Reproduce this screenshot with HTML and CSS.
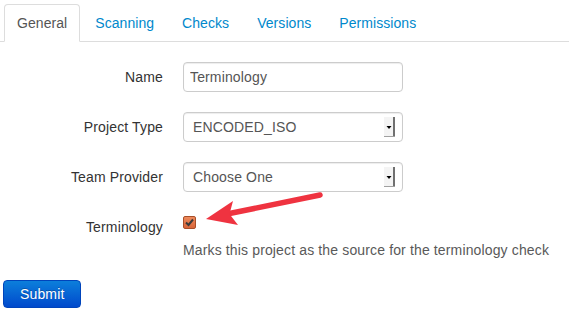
FILE: index.html
```html
<!DOCTYPE html>
<html>
<head>
<meta charset="utf-8">
<link rel="stylesheet" href="styles.css">
</head>
<body>
<div class="page">
  <ul class="tabs">
    <li class="tab active"><a>General</a></li>
    <li class="tab"><a>Scanning</a></li>
    <li class="tab"><a>Checks</a></li>
    <li class="tab"><a>Versions</a></li>
    <li class="tab"><a>Permissions</a></li>
  </ul>
  <form class="form">
    <div class="group">
      <label class="label">Name</label>
      <div class="controls"><input class="input" type="text" value="Terminology"></div>
    </div>
    <div class="group">
      <label class="label">Project Type</label>
      <div class="controls"><select class="select"><option>ENCODED_ISO</option></select></div>
    </div>
    <div class="group">
      <label class="label">Team Provider</label>
      <div class="controls"><select class="select"><option>Choose One</option></select></div>
    </div>
    <div class="group">
      <label class="label">Terminology</label>
      <div class="controls">
        <div class="check-row">
          <span class="checkbox"><svg width="13" height="13" viewBox="0 0 13 13"><path d="M3 6.5 L5.5 9 L10 3.5" fill="none" stroke="#3a3a3a" stroke-width="2"/></svg></span>
        </div>
        <p class="help">Marks this project as the source for the terminology check</p>
      </div>
    </div>
    <div class="actions">
      <button type="button" class="btn">Submit</button>
    </div>
  </form>
  <svg class="annot" width="569" height="333" viewBox="0 0 569 333">
    <line x1="227" y1="214" x2="320" y2="195" stroke="#ef3340" stroke-width="5.5" stroke-linecap="round"/>
    <polygon points="206,219 233,201 229.5,214 238,225" fill="#ef3340"/>
  </svg>
</div>
</body>
</html>
```
FILE: styles.css
```css
* { box-sizing: border-box; }
html, body { margin: 0; padding: 0; background: #fff; }
body {
  font-family: "Liberation Sans", Arial, sans-serif;
  font-size: 14px;
  line-height: 20px;
  letter-spacing: 0.14px;
  color: #333;
}
.page {
  position: relative;
  width: 569px;
  height: 333px;
  padding-top: 4px;
}
.tabs {
  list-style: none;
  margin: 0 0 20px 0;
  padding: 0 0 0 4px;
  display: flex;
  border-bottom: 1px solid #ddd;
  letter-spacing: 0.06px;
}
.tab {
  margin-right: 2px;
  margin-bottom: -1px;
}
.tab a {
  display: block;
  padding: 8px 12px;
  line-height: 20px;
  border: 1px solid transparent;
  border-radius: 4px 4px 0 0;
  color: #0088cc;
}
.tab.active a {
  color: #555;
  background: #fff;
  border-color: #ddd #ddd transparent #ddd;
}
.form {
  padding-left: 3px;
}
.group {
  display: flex;
  margin-bottom: 20px;
}
.label {
  width: 160px;
  flex: none;
  text-align: right;
  padding-top: 5px;
  color: #333;
}
.controls {
  margin-left: 20px;
}
.input, .select {
  display: block;
  width: 220px;
  height: 30px;
  padding: 4px 6px;
  font-family: "Liberation Sans", Arial, sans-serif;
  font-size: 14px;
  line-height: 20px;
  letter-spacing: 0.14px;
  color: #555;
  background-color: #fff;
  border: 1px solid #ccc;
  border-radius: 4px;
  box-shadow: inset 0 1px 1px rgba(0,0,0,0.075);
  margin: 0;
  outline: none;
}
.select {
  -webkit-appearance: none;
  appearance: none;
  padding-left: 9px;
  background-image: url("data:image/svg+xml,%3Csvg xmlns='http://www.w3.org/2000/svg' width='11' height='20' viewBox='0 0 11 20'%3E%3Crect x='0' y='0' width='11' height='20' fill='%23f4f4f4'/%3E%3Crect x='9' y='0' width='2' height='20' fill='%23707070'/%3E%3Crect x='0' y='19' width='11' height='1' fill='%23a0a0a0'/%3E%3Cpath d='M2.5 9 L7.5 9 L5 12 Z' fill='%23000'/%3E%3C/svg%3E");
  background-repeat: no-repeat;
  background-position: right 7px center;
}
.check-row {
  height: 28px;
  padding-top: 4px;
}
.checkbox {
  display: block;
  width: 13px;
  height: 13px;
  border: 1px solid #a84e28;
  border-radius: 2px;
  background: linear-gradient(#ee8a5c, #d8653a);
}
.checkbox svg { display: block; margin: -1px 0 0 -1px; }
.help {
  margin: 0;
  color: #595959;
  line-height: 20px;
}
.btn {
  display: block;
  height: 28px;
  padding: 0 16px;
  font-family: "Liberation Sans", Arial, sans-serif;
  font-size: 14px;
  line-height: 26px;
  letter-spacing: 0.14px;
  color: #fff;
  background: linear-gradient(#0c7fdb, #0049cc);
  border: 1px solid #0044bb;
  border-radius: 4px;
  text-shadow: 0 -1px 0 rgba(0,0,0,0.25);
}
.annot {
  position: absolute;
  left: 0;
  top: 0;
  pointer-events: none;
}
```
